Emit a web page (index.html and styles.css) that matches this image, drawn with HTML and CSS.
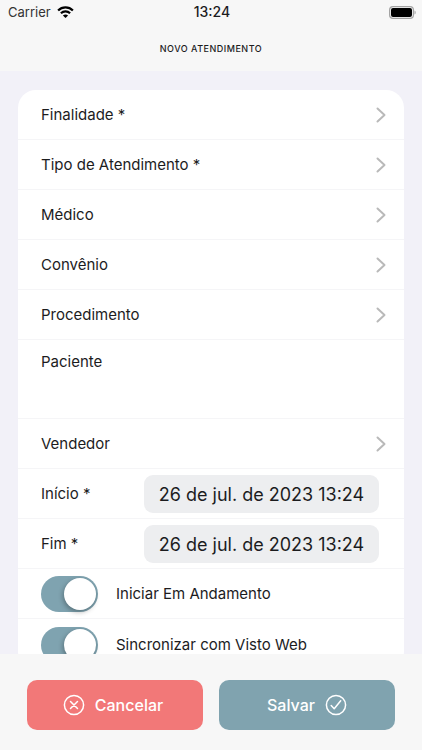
FILE: index.html
```html
<!DOCTYPE html>
<html lang="pt-BR">
<head>
<meta charset="utf-8">
<meta name="viewport" content="width=device-width, initial-scale=1">
<title>Novo Atendimento</title>
<link rel="stylesheet" href="styles.css">
</head>
<body>
<svg class="defs" aria-hidden="true">
  <symbol id="chevron" viewBox="0 0 10 16"><path d="M1.500 1.500 8.500 8l-7 6.500" fill="none" stroke="currentColor" stroke-width="2" stroke-linecap="round" stroke-linejoin="round"/></symbol>
</svg>
<header class="header">
  <div class="status">
    <div class="carrier">
      <span>Carrier</span>
      <svg class="wifi" viewBox="0 0 17 12" aria-hidden="true">
        <g fill="none" stroke="#000" stroke-width="2.200">
          <path d="M1.100 4.500C5.200.4 11.800.4 15.900 4.500"/>
          <path d="M3.900 7.300c2.600-2.500 6.600-2.500 9.200 0"/>
        </g>
        <path d="M8.500 12 5.900 9.400c1.500-1.300 3.700-1.300 5.200 0z"/>
      </svg>
    </div>
    <span class="clock">13:24</span>
    <svg class="battery" viewBox="0 0 27 13" aria-hidden="true">
      <rect x=".6" y=".6" width="23.800" height="11.800" rx="3.400" fill="none" stroke="#a3a3a3" stroke-width="1.200"/>
      <rect x="2" y="2" width="21" height="9" rx="2"/>
      <path d="M25.500 4.500c1.600.6 1.600 3.400 0 4z" fill="#a3a3a3"/>
    </svg>
  </div>
  <h1 class="title">NOVO ATENDIMENTO</h1>
</header>
<main class="content">
  <form class="card" id="form">
    <button type="button" class="row">Finalidade *<svg class="chevron"><use href="#chevron"/></svg></button>
    <button type="button" class="row">Tipo de Atendimento *<svg class="chevron"><use href="#chevron"/></svg></button>
    <button type="button" class="row">Médico<svg class="chevron"><use href="#chevron"/></svg></button>
    <button type="button" class="row">Convênio<svg class="chevron"><use href="#chevron"/></svg></button>
    <button type="button" class="row">Procedimento<svg class="chevron"><use href="#chevron"/></svg></button>
    <div class="row row-text">
      <label for="paciente">Paciente</label>
      <textarea class="patient" id="paciente"></textarea>
    </div>
    <button type="button" class="row">Vendedor<svg class="chevron"><use href="#chevron"/></svg></button>
    <div class="row row-date">
      <label for="inicio">Início *</label>
      <input class="date" id="inicio" type="text" value="26 de jul. de 2023 13:24">
    </div>
    <div class="row row-date">
      <label for="fim">Fim *</label>
      <input class="date" id="fim" type="text" value="26 de jul. de 2023 13:24">
    </div>
    <div class="row row-switch">
      <input class="switch" id="iniciar" type="checkbox" role="switch" checked>
      <label for="iniciar">Iniciar Em Andamento</label>
    </div>
    <div class="row row-switch">
      <input class="switch" id="sincronizar" type="checkbox" role="switch" checked>
      <label for="sincronizar">Sincronizar com Visto Web</label>
    </div>
  </form>
</main>
<footer class="actions">
  <button type="button" class="action cancel">
    <svg class="icon" viewBox="0 0 22 22" aria-hidden="true"><circle cx="11" cy="11" r="9.600"/><path d="m7.500 7.500 7 7m0-7-7 7"/></svg>
    Cancelar
  </button>
  <button type="submit" form="form" class="action save">
    Salvar
    <svg class="icon" viewBox="0 0 22 22" aria-hidden="true"><circle cx="11" cy="11" r="9.600"/><path d="m6.200 11.600 3 3.200 6.500-8"/></svg>
  </button>
</footer>
</body>
</html>
```
FILE: styles.css
```css
* {
  box-sizing: border-box;
}

body {
  margin: 0;
  height: 100vh;
  display: flex;
  flex-direction: column;
  background: #f2f1f8;
  color: #1c1c1e;
  font: 15px/20px Inter, "Liberation Sans", sans-serif;
}

button,
input,
textarea {
  margin: 0;
  border: 0;
  font: inherit;
  color: inherit;
}

.defs {
  display: none;
}

.header {
  background: #f7f7f7;
  padding-bottom: 15px;
}

.status {
  display: grid;
  grid-template-columns: 1fr auto 1fr;
  align-items: center;
  height: 24px;
  padding: 0 6px 0 8px;
  font-size: 13px;
}

.carrier {
  display: flex;
  align-items: center;
  gap: 6px;
  color: #333;
}

.wifi {
  width: 17px;
  height: 12px;
}

.clock {
  font-size: 14px;
  font-weight: 500;
}

.battery {
  width: 27px;
  height: 13px;
  justify-self: end;
}

.title {
  margin: 18px 0 0;
  font-size: 9px;
  line-height: 14px;
  font-weight: 500;
  letter-spacing: 0.5px;
  text-align: center;
}

.content {
  flex: 1;
  min-height: 0;
  overflow-y: auto;
  scrollbar-width: none;
  padding: 19px 18px;
}

.card {
  background: #fff;
  border-radius: 18px;
  overflow: hidden;
}

.row {
  display: flex;
  align-items: center;
  justify-content: space-between;
  width: 100%;
  min-height: 50px;
  padding: 1px 18px 0 23px;
  border-bottom: 1px solid #f5f5f7;
  background: none;
  text-align: left;
}

.row:last-child {
  border-bottom: 0;
}

.chevron {
  width: 10px;
  height: 16px;
  color: #b9b9b9;
}

.row-text {
  flex-direction: column;
  align-items: stretch;
  padding-top: 12px;
}

.patient {
  height: 46px;
  padding: 0;
  background: none;
  resize: none;
}

.row-date {
  gap: 16px;
  padding-right: 25px;
}

.date {
  width: 235px;
  height: 38px;
  padding: 0;
  border-radius: 9px;
  background: #edeef0;
  font-size: 18px;
  text-align: center;
}

.row-switch {
  justify-content: flex-start;
  gap: 18px;
}

.switch {
  appearance: none;
  display: flex;
  justify-content: flex-end;
  width: 57px;
  height: 36px;
  padding: 2px;
  border-radius: 18px;
  background: #7fa3b0;
}

.switch::before {
  content: "";
  width: 32px;
  height: 32px;
  border-radius: 50%;
  background: #fff;
  box-shadow: -1px 2px 5px rgba(0, 0, 0, 0.3);
}

.switch:not(:checked) {
  justify-content: flex-start;
  background: #e3e3e6;
}

.actions {
  display: grid;
  grid-template-columns: 1fr 1fr;
  gap: 16px;
  padding: 26px 27px 20px;
  background: #f7f7f7;
}

.action {
  display: flex;
  align-items: center;
  justify-content: center;
  gap: 10px;
  height: 50px;
  padding: 0 6px;
  border-radius: 10px;
  color: #fff;
  font-size: 16px;
  font-weight: 500;
}

.cancel {
  padding-right: 10px;
  background: #f27878;
}

.save {
  background: #80a3af;
}

.icon {
  width: 22px;
  height: 22px;
  fill: none;
  stroke: currentColor;
  stroke-width: 1.5px;
  stroke-linecap: round;
  stroke-linejoin: round;
}
```
